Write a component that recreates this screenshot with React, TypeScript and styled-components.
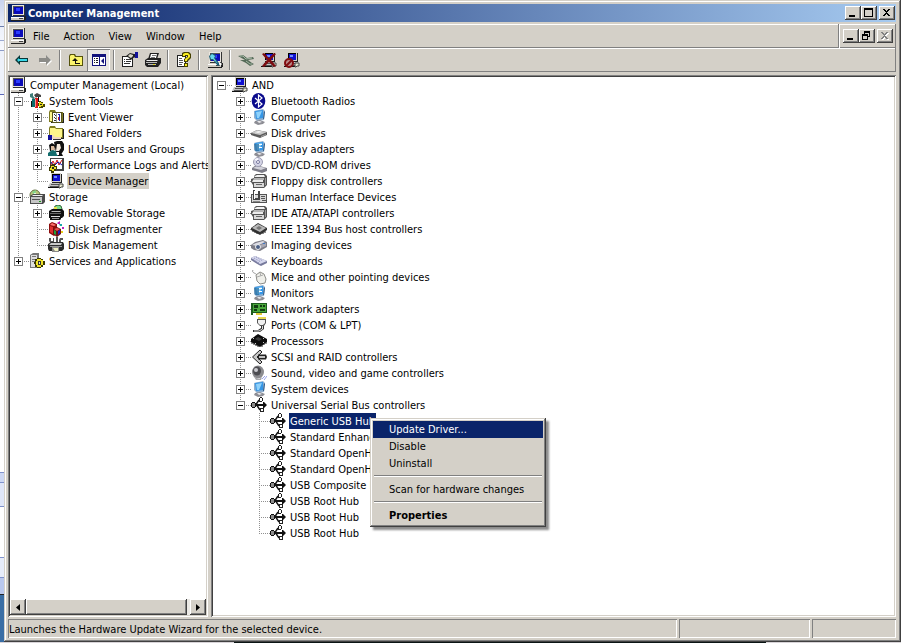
import React from "react";
import styled, { createGlobalStyle, css } from "styled-components";

const face = "#d4d0c8";
const shade = "#808080";
const dark = "#404040";
const navy = "#0a246a";

const GlobalStyle = createGlobalStyle`
  * { box-sizing: border-box; }
  html, body, #root { height: 100%; }
  body {
    margin: 0;
    overflow: hidden;
    background: #eef1fa;
    color: #000;
    font-family: "DejaVu Sans Condensed", "DejaVu Sans", sans-serif;
    font-size: 11px;
    line-height: 16px;
  }
  button {
    margin: 0;
    padding: 0;
    border: 0;
    background: transparent;
    color: inherit;
    font: inherit;
  }
`;

const raised = css`
  background: ${face};
  box-shadow: inset -1px -1px ${dark}, inset 1px 1px #fff, inset -2px -2px ${shade};
`;

const Desktop = styled.div`
  height: 100vh;
  display: flex;
  flex-direction: column;
`;
const DesktopRow = styled.div`
  flex: 1;
  min-height: 0;
  display: flex;
`;
const Backdrop = styled.div`
  width: 4px;
  flex: none;
  display: flex;
  flex-direction: column;
  overflow: hidden;
  background: linear-gradient(#c9d3ee 0, #eef2fb 30px, #fbfcff 60px, #fff 480px);
`;
const Sliver = styled.div<{ $h: number; $bg?: string; $line?: string }>`
  height: ${(p) => p.$h}px;
  flex: none;
  background: ${(p) => p.$bg ?? "transparent"};
  border-top: 1px solid ${(p) => p.$line ?? "transparent"};
`;
const Taskbar = styled.div`
  height: 1px;
  flex: none;
  display: flex;
  background: #d8d4d8;
`;
const TaskbarDark = styled.div`
  margin-left: 26%;
  width: 59%;
  background: #0a1414;
`;

const Window = styled.main`
  flex: 1;
  min-width: 0;
  display: flex;
  flex-direction: column;
  padding: 4px 5px 4px 4px;
  background: ${face};
  box-shadow: inset -1px -1px ${dark}, inset 1px 1px ${face}, inset -2px -2px ${shade}, inset 2px 2px #fff;
`;
const TitleBar = styled.header`
  height: 18px;
  flex: none;
  display: flex;
  align-items: center;
  padding: 0 1px 0 2px;
  background: linear-gradient(to right, ${navy}, #a6caf0);
  color: #fff;
`;
const Title = styled.h1`
  margin: 0 0 0 2px;
  flex: 1;
  padding-top: 1px;
  font-size: 11px;
  font-weight: bold;
  line-height: 18px;
`;
const CaptionButtons = styled.div`
  display: flex;
`;
const CaptionButton = styled.button<{ $gap?: boolean }>`
  ${raised}
  width: 16px;
  height: 14px;
  margin-left: ${(p) => (p.$gap ? 2 : 0)}px;
  display: flex;
  svg { display: block; }
`;

const bar = css`
  height: 24px;
  flex: none;
  display: flex;
  align-items: center;
  box-shadow: inset -1px -1px ${shade}, inset 1px 1px #fff;
`;
const MenuBar = styled.nav`
  ${bar}
  margin-top: 2px;
  padding: 0 3px 0 2px;
`;
const MenuButton = styled.button`
  padding: 1px 7px 0;
  height: 20px;
`;
const ChildButtons = styled.div`
  height: 24px;
  margin-left: auto;
  display: flex;
  align-items: center;
  padding-left: 3px;
  border-left: 1px solid #fff;
  box-shadow: -1px 0 ${shade};
`;
const ToolBar = styled.div`
  ${bar}
  padding: 0 2px;
`;
const ToolButton = styled.button<{ $pressed?: boolean }>`
  width: 23px;
  height: 22px;
  display: flex;
  align-items: center;
  justify-content: center;
  ${(p) =>
    p.$pressed &&
    css`
      background: #eae8e4;
      box-shadow: inset 1px 1px ${shade}, inset -1px -1px #fff;
    `}
`;
const ToolDivider = styled.span`
  width: 2px;
  height: 20px;
  margin: 0 3px;
  border-left: 1px solid ${shade};
  border-right: 1px solid #fff;
`;

const Panes = styled.div`
  flex: 1;
  min-height: 0;
  margin-top: 3px;
  display: flex;
  gap: 3px;
`;
const Pane = styled.section<{ $side?: boolean }>`
  display: flex;
  flex-direction: column;
  min-width: 0;
  overflow: hidden;
  padding: 2px;
  background: #fff;
  box-shadow: inset 1px 1px ${shade}, inset -1px -1px #fff, inset 2px 2px ${dark}, inset -2px -2px ${face};
  ${(p) => (p.$side ? "width: 200px; flex: none;" : "flex: 1;")}
`;
const Tree = styled.ul`
  flex: 1;
  min-height: 0;
  margin: 0;
  padding: 0;
  list-style: none;
`;
const Node = styled.li`
  position: relative;
  display: flex;
  height: 16px;
  white-space: nowrap;
`;
const dotsDown = (h: string) =>
  `repeating-linear-gradient(#909090 0 1px, transparent 1px 2px) 8px 0 / 1px ${h} no-repeat`;
const dotsAcross = `repeating-linear-gradient(to right, #909090 0 1px, transparent 1px 2px) 8px 8px / 11px 1px no-repeat`;
const guides: Record<string, string> = {
  b: "none",
  v: dotsDown("16px"),
  t: `${dotsDown("16px")}, ${dotsAcross}`,
  l: `${dotsDown("9px")}, ${dotsAcross}`,
  o: dotsAcross,
};
const Guide = styled.span<{ $kind: string }>`
  width: 19px;
  flex: none;
  padding: 4px;
  background: ${(p) => guides[p.$kind]};
`;
const Expander = styled.button`
  display: block;
  width: 9px;
  height: 9px;
  svg { display: block; }
`;
const Label = styled.span<{ $tone?: string }>`
  margin-left: 3px;
  padding: 1px 1px 0;
  ${(p) => p.$tone === "active" && `background: ${navy}; color: #fff;`}
  ${(p) => p.$tone === "idle" && `background: ${face};`}
`;
const Glyph = styled.svg`
  display: block;
  flex: none;
`;

const ScrollBar = styled.div`
  height: 16px;
  flex: none;
  display: flex;
  background: #ebe9e5;
`;
const ScrollArrow = styled.button`
  ${raised}
  width: 16px;
  flex: none;
  display: flex;
  align-items: center;
  justify-content: center;
`;
const ScrollTrack = styled.div`
  flex: 1;
  display: flex;
`;
const ScrollThumb = styled.div`
  ${raised}
  width: 98%;
`;

const StatusBar = styled.footer`
  flex: none;
  margin-top: 2px;
  display: grid;
  grid-template-columns: 1fr 131px 84px;
  gap: 2px;
`;
const StatusCell = styled.div`
  height: 19px;
  padding: 1px 1px 0;
  line-height: 20px;
  box-shadow: inset 1px 1px ${shade}, inset -1px -1px #fff;
`;

const Popup = styled.div`
  position: absolute;
  z-index: 1;
  left: 157px;
  top: 5px;
  width: 176px;
  padding: 3px;
  background: ${face};
  box-shadow: inset -1px -1px ${dark}, inset 1px 1px ${face}, inset -2px -2px ${shade}, inset 2px 2px #fff,
    3px 3px 2px rgba(0, 0, 0, 0.45);
`;
const PopupItem = styled.button<{ $active?: boolean; $bold?: boolean }>`
  display: block;
  width: 100%;
  height: 17px;
  padding: 0 16px;
  text-align: left;
  line-height: 17px;
  font-weight: ${(p) => (p.$bold ? "bold" : "normal")};
  ${(p) => p.$active && `background: ${navy}; color: #fff;`}
`;
const PopupRule = styled.hr`
  height: 2px;
  margin: 3px 1px 4px;
  border: 0;
  border-top: 1px solid ${shade};
  border-bottom: 1px solid #fff;
`;

/* 16x16 drawings */

const xpMonitor = (
  <>
    <path d="M3 2 12 0 14 2 13 11 6 12 3 9Z" fill="#8fb0d0" />
    <path d="M4 2 12 1 12 9 5 10Z" fill="#3596e6" />
    <path d="M5 3 11 2 8 9 6 9Z" fill="#8fd2fb" />
    <path d="M13 2 14 3 13 10 12 10Z" fill="#2f5b88" />
    <path d="M4 12 9 11 14 13 12 15 7 16 3 14Z" fill="#8d8d94" />
    <path d="M6 12 9 12 11 13 8 14Z" fill="#e6e6ea" />
  </>
);
const drive = (
  <>
    <path d="M0 8 6 5 16 7 16 10 9 13 0 10Z" fill="#5c5c5c" />
    <path d="M0 8 6 5 16 7 9 10Z" fill="#c9c9c9" />
    <path d="M4 7 8 6 11 7 7 8Z" fill="#f4f4f4" />
    <path d="M10 11 15 9V10L10 12Z" fill="#a4a4a4" />
  </>
);
const controllerBox = (
  <>
    <path d="M3 3 5 1H14L16 3V12L13 15H2V12L0 9V6L3 5Z" fill="#555" />
    <path d="M4 3 6 2H13L14 4H3Z" fill="#f2f2f2" />
    <path d="M3 5H13V7H2Z" fill="#b5b5b5" />
    <path d="M2 7H12V9H1Z" fill="#ececec" />
    <path d="M3 10H13V14H3Z" fill="#d8d8d8" />
    <path d="M5 11H11V12H5Z" fill="#666" />
    <path d="M14 5H15V12H14Z" fill="#999" />
  </>
);
const laptopPc = (
  <>
    <path d="M3 0H13V9H3Z" fill="#d4d0c8" />
    <path d="M4 1H12V8H4Z" fill="#000" />
    <path d="M5 2H12V8H5Z" fill="#1010d0" />
    <path d="M6 3H9V5H6Z" fill="#6f8cff" />
    <path d="M13 1H14V10H4V9H13Z" fill="#222" />
    <path d="M2 10H13L15 14H0Z" fill="#c4c4c4" />
    <path d="M3 11H12V12H3ZM2 13H11V14H2Z" fill="#555" />
    <path d="M0 14H13V15H0Z" fill="#111" />
    <path d="M11 11H15V14H13L12 15H11Z" fill="#e8e8d0" stroke="#444" strokeWidth="1" />
  </>
);
const folder = (
  <>
    <path d="M1 3 2 1H7L8 3H15V13H1Z" fill="#7d7a20" />
    <path d="M2 3H7L8 4H14V12H2Z" fill="#fdf58a" />
    <path d="M15 4H16V14H3V13H15Z" fill="#222" />
  </>
);
const monitorPc = (
  <>
    <path d="M2 0H14V11H2Z" fill="#e9e6df" />
    <path d="M3 1H13V9H3Z" fill="#555" />
    <path d="M4 2H13V9H4Z" fill="#0b0bb8" />
    <path d="M6 3H10V6H6Z" fill="#2b3cff" />
    <path d="M14 0H15V11H3V10H14Z" fill="#333" />
    <path d="M1 12H14V15H1Z" fill="#cfcbc3" />
    <path d="M1 12H14V13H1Z" fill="#fff" />
    <path d="M9 13H13V14H9Z" fill="#444" />
    <path d="M14 11H16V15H15V16H1V15H14Z" fill="#222" />
  </>
);

const icons: Record<string, React.ReactNode> = {
  pc: monitorPc,
  devices: laptopPc,
  tools: (
    <>
      <path d="M1 1 4 0V3L6 5 4 7 3 5 1 4Z" fill="#3e7d78" />
      <path d="M5 2 8 0 12 2V4H8L7 5Z" fill="#444" />
      <path d="M3 6H6V14H3Z" fill="#0b6b6b" />
      <path d="M6 5H9V15H6Z" fill="#e01818" />
      <path d="M6 6H7V14H6Z" fill="#ff8a8a" />
      <path d="M9 4H10V9H9ZM2 8H3V14H2Z" fill="#111" />
      <path d="M10 8H12V9H14V11H16V14H14V15H10V13H9V10H10Z" fill="#4a4700" />
      <path d="M10 9H12V10H14V13H12V14H10Z" fill="#e8dc20" />
      <path d="M11 11H13V12H11Z" fill="#222" />
    </>
  ),
  events: (
    <>
      {folder}
      <path d="M4 3H14V14H4Z" fill="#55521c" />
      <path d="M5 4H13V13H5Z" fill="#fff" />
      <path d="M6 5H7V6H6ZM7 6H8V7H7ZM6 8H7V9H6ZM7 9H8V10H7ZM6 11H8V12H6Z" fill="#333" />
      <path d="M8 4H9V13H8Z" fill="#999" />
      <path d="M10 5H12V6H10ZM11 6H12V12H11Z" fill="#2222bb" />
      <path d="M10 8H11V11H10Z" fill="#d02020" />
    </>
  ),
  shared: (
    <>
      {folder}
      <path d="M1 10H5L7 12H13V14H5L3 15H1Z" fill="#f0d8c0" />
      <path d="M0 10H4V15H0Z" fill="#10109a" />
      <path d="M5 14H13V15H5Z" fill="#333" />
    </>
  ),
  users: (
    <>
      <path d="M6 1 9 0H14L16 3V9L14 12H8Z" fill="#111" />
      <path d="M9 3H12L13 7 11 10H8Z" fill="#f5e9dc" />
      <path d="M1 4 4 2 7 4V8L5 10H2Z" fill="#0d0d0d" />
      <path d="M3 5H6L7 8 5 10H3Z" fill="#d8b79a" />
      <path d="M0 12 4 9 8 10 10 14V15H0Z" fill="#146d6d" />
      <path d="M9 11 13 11 15 15H10Z" fill="#111" />
      <path d="M8 11H11V14H9Z" fill="#fff" />
    </>
  ),
  perf: (
    <>
      <path d="M2 1H16V14H2Z" fill="#444" />
      <path d="M3 2H14V12H3Z" fill="#fff" />
      <path d="M3 8 5 4 7 8 9 3 11 8 14 3" fill="none" stroke="#d01818" />
      <path d="M3 5 6 9 10 5 14 8" fill="none" stroke="#1414b0" />
      <path d="M2 8H4V7H7V9H9V12H8V14H6V16H3V14H1V10H2Z" fill="#3c3a00" />
      <path d="M3 9H6V10H8V12H6V14H4V13H2V11H3Z" fill="#ece02a" />
      <path d="M4 10H6V12H4Z" fill="#222" />
    </>
  ),
  storage: (
    <>
      <circle cx="6" cy="6" r="5" fill="#b9c47a" stroke="#667040" />
      <path d="M3 3 6 6 7 1Z" fill="#7fd88a" />
      <circle cx="6" cy="5" r="1" fill="#fff" />
      <path d="M1 7 4 5H16V13L14 15H1Z" fill="#4b4b4b" />
      <path d="M2 8H13V14H2Z" fill="#c6c6c6" />
      <path d="M4 6H14L13 7H3Z" fill="#f0f0f0" />
      <path d="M3 10H11V11H3Z" fill="#555" />
      <path d="M10 12H12V13H10Z" fill="#18a018" />
    </>
  ),
  removable: (
    <>
      <circle cx="10" cy="4" r="4" fill="#7ddc8c" stroke="#3b6b42" />
      <path d="M6 2H9V5H6Z" fill="#e7e24b" />
      <path d="M1 6 4 4H14L16 6V11L14 13H1Z" fill="#111" />
      <path d="M4 6H13L12 7H3Z" fill="#bbb" />
      <path d="M2 8H13V9H2Z" fill="#666" />
      <path d="M2 10H13V14L12 15H2Z" fill="#111" />
      <path d="M3 11H12V12H3Z" fill="#ddd" />
      <path d="M4 13H11V14H4Z" fill="#999" />
    </>
  ),
  defrag: (
    <>
      <path d="M1 3 4 1 9 3V13L6 15 1 12Z" fill="#8c0c0c" />
      <path d="M2 4 4 2 8 4 6 5Z" fill="#ff7070" />
      <path d="M2 5 5 6V13L2 11Z" fill="#e03030" />
      <path d="M5 8 9 6 13 8V13L9 16 5 13Z" fill="#701010" />
      <path d="M6 8 9 7 12 8 9 10Z" fill="#f05050" />
      <path d="M6 9 8 10V14L6 13Z" fill="#20a040" />
      <path d="M10 10 12 9V12L10 14Z" fill="#2020c8" />
      <path d="M9 2 12 0V3H10ZM14 6H16V8H14Z" fill="#bb22bb" />
      <path d="M11 3H14V5H12Z" fill="#18a8a8" />
      <path d="M13 10H15V12H13Z" fill="#e8d018" />
    </>
  ),
  diskmgmt: (
    <>
      <path d="M1 1H3V4H5V1H6V5L4 7H3L1 4ZM8 0H10V5H8ZM12 1H15V3H13V6H11V3Z" fill="#555" />
      <path d="M0 7 3 5H15L16 7V12L14 14H1L0 12Z" fill="#2c2c2c" />
      <path d="M3 6H14L13 8H1Z" fill="#c9c9c9" />
      <path d="M2 9H14V10H2Z" fill="#999" />
      <path d="M4 10H11V15H4Z" fill="#888" />
      <path d="M5 11H10V14H7Z" fill="#f1f1c0" />
    </>
  ),
  services: (
    <>
      <path d="M1 2 4 0H10V12L8 15H1Z" fill="#777" />
      <path d="M2 2H8V14H2Z" fill="#dedede" />
      <path d="M3 3H7V4H3ZM3 6H7V7H3ZM3 8H7V9H3Z" fill="#777" />
      <path d="M8 5H12V6H14V8H16V12H14V14H12V15H8V14H6V11H5V9H6V6H8Z" fill="#3a3800" />
      <path d="M8 6H12V7H14V12H12V14H8V12H7V8H8Z" fill="#f0e428" />
      <path d="M9 8H12V12H9Z" fill="#333" />
      <path d="M10 9H11V11H10Z" fill="#ddd" />
    </>
  ),
  bluetooth: (
    <>
      <ellipse cx="7.5" cy="8" rx="6.8" ry="8" fill="#0a0a8c" />
      <path d="M4 5 11 11 7.5 14V2L11 5 4 11" fill="none" stroke="#fff" strokeWidth="1.2" />
    </>
  ),
  monitor: xpMonitor,
  display: (
    <>
      {xpMonitor}
      <path d="M3 3H8V10H4Z" fill="#2c6f9e" opacity="0.7" />
      <path d="M8 3H11V4H8ZM8 6H11V7H8Z" fill="#fff" />
    </>
  ),
  drive,
  dvd: (
    <>
      <path d="M1 11 5 8 16 11V14L11 16 1 13Z" fill="#7d7d88" />
      <path d="M2 11 6 9 15 11 10 13Z" fill="#d2d2da" />
      <circle cx="7" cy="5" r="4.5" fill="#d4d4e6" stroke="#9a9ab0" />
      <path d="M7 5 3 2 7 1Z" fill="#fafaff" />
      <circle cx="7" cy="5" r="1.5" fill="#fff" stroke="#7777a0" />
    </>
  ),
  controller: controllerBox,
  hid: (
    <>
      <path d="M0 5H16V14H0Z" fill="#555" />
      <path d="M1 6H15V13H1Z" fill="#d8d8d8" />
      <path d="M2 1H4V9H7V2H9V11H2Z" fill="#444" />
      <path d="M3 2H4V10H3Z" fill="#fff" />
      <path d="M10 7H14V8H10ZM10 9H14V10H10ZM11 11H15V12H11Z" fill="#555" />
      <path d="M2 12H9V13H2Z" fill="#888" />
    </>
  ),
  firewire: (
    <>
      <path d="M0 7 7 2 16 7V9L9 14 0 9Z" fill="#333" />
      <path d="M1 7 7 3 15 7 9 11Z" fill="#b9b9b9" />
      <path d="M5 7 8 5 11 7 8 9Z" fill="#777" />
      <path d="M2 9V11M4 10V12M6 11V13M12 11V13M14 10V12" fill="none" stroke="#222" />
    </>
  ),
  camera: (
    <>
      <path d="M0 8 4 5 12 3 16 5V10L9 14 3 13 0 11Z" fill="#7c7c86" />
      <path d="M1 8 5 6 12 4 14 5 6 9Z" fill="#dcdce4" />
      <path d="M9 8 15 6V9L10 11Z" fill="#a8a8b4" />
      <circle cx="7" cy="10" r="2.5" fill="#4b5f86" stroke="#eee" />
      <path d="M12 6H14V7H12Z" fill="#3d78c8" />
    </>
  ),
  keyboard: (
    <>
      <path d="M0 5 4 3 16 8V10L10 13 8 12 0 7Z" fill="#777a9c" />
      <path d="M0 5 4 3 16 8 9 11Z" fill="#d7d9ee" />
      <path d="M3 5 10 9M5 4 12 8M2 6 8 10" stroke="#8a8cb8" strokeDasharray="1 1" fill="none" />
    </>
  ),
  mouse: (
    <>
      <path d="M2 1C0 4 5 4 6 6" fill="none" stroke="#999" />
      <path d="M5 6 9 3 13 5 15 10 14 14 9 15 6 12Z" fill="#efefea" stroke="#8c8c88" />
      <path d="M6 8 12 6M9 4 10 7" stroke="#aaa" fill="none" />
    </>
  ),
  network: (
    <>
      <path d="M0 2H16V12H2V14H0Z" fill="#1c5a1c" />
      <path d="M2 3H15V11H2Z" fill="#49a83c" />
      <path d="M3 4H7V7H3ZM9 4H11V6H9ZM12 4H14V6H12ZM9 8H14V10H9ZM3 8H6V10H3Z" fill="#103c10" />
      <path d="M5 12H11V14H5Z" fill="#e0c838" />
    </>
  ),
  port: (
    <>
      <path d="M7 0H15V2H7Z" fill="#e8d850" />
      <path d="M6 2H15V6L13 9H9L6 6Z" fill="#555" />
      <path d="M7 3H14V6L12 8H9L7 6Z" fill="#f0f0f0" />
      <path d="M10 9H13V12L9 15H2V13H7L10 11Z" fill="#333" />
      <path d="M11.5 9V12L8 14H3" fill="none" stroke="#ddd" />
    </>
  ),
  cpu: (
    <>
      <path d="M0 6 7 1 16 6V9L9 14 0 9Z" fill="#0c0c0c" />
      <path d="M4 6 7 4 11 6 8 8Z" fill="#3a3a3a" />
      <path d="M1 9V11M3 10V12M5 11V13M7 12V14M11 12V14M13 11V12M15 9V11" stroke="#222" />
      <path d="M2 5H3V6H2ZM12 5H13V6H12ZM4 10H5V11H4ZM12 9H13V10H12Z" fill="#ccc" />
    </>
  ),
  scsi: (
    <>
      <path d="M9 1 1.5 8 9 15 11 13 6 8 11 3Z" fill="#c8c8c8" stroke="#222" />
      <path d="M7 5.5H15L16 8 15 10.5H7Z" fill="#222" />
      <path d="M8 7H14V9H8Z" fill="#c0c0c0" />
    </>
  ),
  sound: (
    <>
      <ellipse cx="7" cy="7" rx="6" ry="6.5" fill="#8b8b8f" />
      <ellipse cx="6" cy="6" rx="4" ry="4.5" fill="#4d4d52" />
      <ellipse cx="5" cy="5" rx="2" ry="2" fill="#c9c9cf" />
      <path d="M3 12 8 14 11 12 10 15 5 15Z" fill="#a6a6aa" />
      <path d="M11 14 14 11M13 15 16 11" stroke="#9aa4e8" fill="none" />
    </>
  ),
  usb: (
    <>
      <path d="M5 7.5 8 3M6 8.5 9 13" fill="none" stroke="#111" strokeWidth="1.4" />
      <path d="M0 6H1V5H4V6H5V10H4V11H1V10H0Z" fill="#111" />
      <path d="M1 6H4V10H1Z" fill="#8c8c8c" />
      <path d="M5 7H12V5H13L16 8 13 11H12V9H5Z" fill="#111" />
      <path d="M8 1H9V0H11V1H12V4H11V5H8Z" fill="#222" />
      <path d="M9 1H11V4H9Z" fill="#fff" />
      <path d="M9 11H13V15H9Z" fill="#222" />
      <path d="M10 12H12V14H10Z" fill="#fff" />
    </>
  ),
  back: (
    <>
      <path d="M1 8 6 3V6H14V10H6V13Z" fill="#083838" />
      <path d="M3 8 5 6V7H13V9H5V10Z" fill="#38d8e8" />
    </>
  ),
  forward: (
    <>
      <path d="M15 9 10 4V7H3V11H10V14Z" fill="#fff" />
      <path d="M14 8 9 3V6H2V10H9V13Z" fill="#8c8c88" />
    </>
  ),
  up: (
    <>
      <path d="M1 4 2 2H7L8 4H15V14H1Z" fill="#55520c" />
      <path d="M2 4 3 3H6L7 5H14V13H2Z" fill="#fbf46c" />
      <path d="M7 6 10 9H8V11H12V12H7V9H4Z" fill="#111" />
    </>
  ),
  tree: (
    <>
      <path d="M1 2H15V14H1Z" fill="#14147c" />
      <path d="M2 5H8V13H2ZM9 5H14V13H9Z" fill="#fff" />
      <path d="M3 6H4V7H3ZM5 6H7V7H5ZM3 8H4V9H3ZM5 8H7V9H5ZM3 10H4V11H3ZM5 10H7V11H5Z" fill="#222" />
      <path d="M13 6V12L10 9Z" fill="#14147c" />
    </>
  ),
  props: (
    <>
      <path d="M0 4H11V15H0Z" fill="#222" />
      <path d="M1 5H10V14H1Z" fill="#fff" />
      <path d="M2 7H3V8H2ZM4 7H9V8H4ZM2 9H3V10H2ZM4 9H9V10H4ZM2 11H8V12H2Z" fill="#333" />
      <path d="M4 4 8 1 12 2H14V5L11 6 9 8 7 6Z" fill="#222" />
      <path d="M6 4 8 2 11 3V4L9 6Z" fill="#d8d8c8" />
      <path d="M13 0H16V6H13Z" fill="#12129a" />
    </>
  ),
  print: (
    <>
      <path d="M5 1H14L12 7H3Z" fill="#222" />
      <path d="M6 2H12L11 6H5Z" fill="#fff" />
      <path d="M7 3H11V4H7ZM6 5H10V6H6Z" fill="#777" />
      <path d="M0 8 3 6H16V11L13 15H2L0 13Z" fill="#222" />
      <path d="M2 8H13L12 9H1Z" fill="#eee" />
      <path d="M1 10H12V11H1ZM3 12H11V13H3Z" fill="#bbb" />
      <path d="M8 12H10V13H8Z" fill="#e4d81c" />
    </>
  ),
  help: (
    <>
      <path d="M1 3H10V15H1Z" fill="#222" />
      <path d="M2 4H9V14H2Z" fill="#fff" />
      <path d="M3 6H6V7H3ZM3 8H7V9H3ZM3 10H7V11H3ZM3 12H6V13H3Z" fill="#555" />
      <path d="M6 1 8 0H13L15 2V6L12 9V10H8V7L11 5V4H9V5H6ZM8 11H12V15H8Z" fill="#444000" />
      <path d="M7 2 9 1H12L14 3V5L11 8V9H9V7L12 5V3H9V4H7ZM9 12H11V14H9Z" fill="#f8ec20" />
    </>
  ),
  scan: (
    <>
      {monitorPc}
      <path d="M2 4 5 1 9 3 8 6 13 12 11 14 6 8 3 8Z" fill="#1c5c74" />
      <path d="M3 4 5 2 8 4 7 6 11 12 6 7 4 7Z" fill="#68d8ec" />
      <path d="M11 9 15 12 13 14Z" fill="#fff" />
    </>
  ),
  update: (
    <>
      <path d="M0 4 5 3 9 6 15 5 16 7 10 8 14 11 16 12 12 14 8 11 2 8 7 8Z" fill="#556a58" />
      <path d="M2 4 5 4 8 7 14 6M8 9 12 12 14 12" fill="none" stroke="#a5b8a4" />
    </>
  ),
  remove: (
    <>
      {laptopPc}
      <path d="M1 2 3 1 8 6 13 1 15 2 10 8 15 14 13 15 8 10 3 15 1 14 6 8Z" fill="#7c0c10" />
    </>
  ),
  disable: (
    <>
      {laptopPc}
      <circle cx="5" cy="11" r="4" fill="#b98a8a" stroke="#800c10" strokeWidth="2" />
      <path d="M2 14 8 8" stroke="#800c10" strokeWidth="2" />
    </>
  ),
};

const Icon = ({ name }: { name: string }) => (
  <Glyph width="16" height="16" viewBox="0 0 16 16" aria-hidden="true">
    {icons[name]}
  </Glyph>
);

const captionPaths: Record<string, string> = {
  Minimize: "M4 9H10V11H4Z",
  Maximize: "M3 2H12V11H3ZM4 4V10H11V4Z",
  Restore: "M5 2H11V8H9V7H10V4H6V5H5ZM3 5H9V11H3ZM4 7V10H8V7Z",
  Close: "M4 3H6V4H7V5H8V4H9V3H11V4H10V5H9V6H8V7H9V8H10V9H11V10H9V9H8V8H7V9H6V10H4V9H5V8H6V7H7V6H6V5H5V4H4Z",
};
const Caption = ({ kind, gap, disabled }: { kind: string; gap?: boolean; disabled?: boolean }) => (
  <CaptionButton $gap={gap} disabled={disabled} aria-label={kind}>
    <svg width="16" height="14" viewBox="0 0 16 14" fillRule="evenodd">
      {disabled && <path d={captionPaths[kind]} fill="#fff" transform="translate(1 1)" />}
      <path d={captionPaths[kind]} fill={disabled ? shade : "#000"} />
    </svg>
  </CaptionButton>
);

type Item = { cells: string[]; icon: string; text: string; tone?: string };

const consoleTree: Item[] = [
  { cells: [], icon: "pc", text: "Computer Management (Local)" },
  { cells: ["t-"], icon: "tools", text: "System Tools" },
  { cells: ["v", "t+"], icon: "events", text: "Event Viewer" },
  { cells: ["v", "t+"], icon: "shared", text: "Shared Folders" },
  { cells: ["v", "t+"], icon: "users", text: "Local Users and Groups" },
  { cells: ["v", "t+"], icon: "perf", text: "Performance Logs and Alerts" },
  { cells: ["v", "l"], icon: "devices", text: "Device Manager", tone: "idle" },
  { cells: ["t-"], icon: "storage", text: "Storage" },
  { cells: ["v", "t+"], icon: "removable", text: "Removable Storage" },
  { cells: ["v", "t"], icon: "defrag", text: "Disk Defragmenter" },
  { cells: ["v", "l"], icon: "diskmgmt", text: "Disk Management" },
  { cells: ["l+"], icon: "services", text: "Services and Applications" },
];

const categories: [string, string][] = [
  ["bluetooth", "Bluetooth Radios"],
  ["monitor", "Computer"],
  ["drive", "Disk drives"],
  ["display", "Display adapters"],
  ["dvd", "DVD/CD-ROM drives"],
  ["controller", "Floppy disk controllers"],
  ["hid", "Human Interface Devices"],
  ["controller", "IDE ATA/ATAPI controllers"],
  ["firewire", "IEEE 1394 Bus host controllers"],
  ["camera", "Imaging devices"],
  ["keyboard", "Keyboards"],
  ["mouse", "Mice and other pointing devices"],
  ["display", "Monitors"],
  ["network", "Network adapters"],
  ["port", "Ports (COM & LPT)"],
  ["cpu", "Processors"],
  ["scsi", "SCSI and RAID controllers"],
  ["sound", "Sound, video and game controllers"],
  ["monitor", "System devices"],
];
const usbDevices = [
  "Generic USB Hub",
  "Standard Enhanced PCI to USB Host Controller",
  "Standard OpenHCD USB Host Controller",
  "Standard OpenHCD USB Host Controller",
  "USB Composite Device",
  "USB Root Hub",
  "USB Root Hub",
  "USB Root Hub",
];
const deviceTree: Item[] = [
  { cells: ["o-"], icon: "devices", text: "AND" },
  ...categories.map(([icon, text]) => ({ cells: ["b", "t+"], icon, text })),
  { cells: ["b", "l-"], icon: "usb", text: "Universal Serial Bus controllers" },
  ...usbDevices.map((text, i) => ({
    cells: ["b", "b", i === usbDevices.length - 1 ? "l" : "t"],
    icon: "usb",
    text,
    tone: i === 0 ? "active" : undefined,
  })),
];

const ContextMenu = () => (
  <Popup role="menu">
    <PopupItem role="menuitem" $active>Update Driver...</PopupItem>
    <PopupItem role="menuitem">Disable</PopupItem>
    <PopupItem role="menuitem">Uninstall</PopupItem>
    <PopupRule />
    <PopupItem role="menuitem">Scan for hardware changes</PopupItem>
    <PopupRule />
    <PopupItem role="menuitem" $bold>Properties</PopupItem>
  </Popup>
);

const TreeView = ({ items, label }: { items: Item[]; label: string }) => (
  <Tree role="tree" aria-label={label}>
    {items.map((item, i) => (
      <Node key={i} role="treeitem" aria-selected={!!item.tone}>
        {item.cells.map((cell, c) => (
          <Guide key={c} $kind={cell[0]}>
            {cell[1] && (
              <Expander aria-label={`${cell[1] === "+" ? "Expand" : "Collapse"} ${item.text}`}>
                <svg width="9" height="9" viewBox="0 0 9 9">
                  <path d="M0 0H9V9H0Z" fill="#808080" />
                  <path d="M1 1H8V8H1Z" fill="#fff" />
                  <path d={cell[1] === "+" ? "M2 4H4V2H5V4H7V5H5V7H4V5H2Z" : "M2 4H7V5H2Z"} />
                </svg>
              </Expander>
            )}
          </Guide>
        ))}
        <Icon name={item.icon} />
        <Label $tone={item.tone}>{item.text}</Label>
        {item.tone === "active" && <ContextMenu />}
      </Node>
    ))}
  </Tree>
);

const toolGroups: [string, string][][] = [
  [["back", "Back"], ["forward", "Forward"]],
  [["up", "Up one level"], ["tree", "Show/Hide console tree"]],
  [["props", "Properties"], ["print", "Print"]],
  [["help", "Help"]],
  [["scan", "Scan for hardware changes"]],
  [["update", "Update driver"], ["remove", "Uninstall"], ["disable", "Disable"]],
];

export default function App() {
  return (
    <Desktop>
      <GlobalStyle />
      <DesktopRow>
        <Backdrop aria-hidden="true">
          <Sliver $h={26} />
          <Sliver $h={14} $line="#6d7fae" />
          <Sliver $h={10} $line="#9aa8d0" />
          <Sliver $h={44} $line="#8b9ac6" $bg="#eef2fb" />
          <Sliver $h={378} $line="#5b67b8" />
          <Sliver $h={10} $line="#7f92cc" $bg="#cdd8f4" />
          <Sliver $h={24} $line="#7f92cc" $bg="#dfe6f8" />
          <Sliver $h={51} $line="#7f92cc" />
          <Sliver $h={20} $line="#7f92cc" $bg="#e6ecfa" />
          <Sliver $h={17} $line="#7f92cc" $bg="#b9c8ee" />
          <Sliver $h={60} $line="#222" $bg="#3a6ea5" />
        </Backdrop>
        <Window>
          <TitleBar>
            <Icon name="pc" />
            <Title>Computer Management</Title>
            <CaptionButtons>
              <Caption kind="Minimize" />
              <Caption kind="Maximize" />
              <Caption kind="Close" gap />
            </CaptionButtons>
          </TitleBar>
          <MenuBar>
            <Icon name="pc" />
            {["File", "Action", "View", "Window", "Help"].map((m) => (
              <MenuButton key={m}>{m}</MenuButton>
            ))}
            <ChildButtons>
              <Caption kind="Minimize" />
              <Caption kind="Restore" />
              <Caption kind="Close" gap disabled />
            </ChildButtons>
          </MenuBar>
          <ToolBar role="toolbar">
            {toolGroups.map((group, g) => (
              <React.Fragment key={g}>
                {g > 0 && <ToolDivider />}
                {group.map(([icon, name]) => (
                  <ToolButton key={icon} $pressed={icon === "tree"} title={name} aria-label={name}>
                    <Icon name={icon} />
                  </ToolButton>
                ))}
              </React.Fragment>
            ))}
          </ToolBar>
          <Panes>
            <Pane $side>
              <TreeView items={consoleTree} label="Console tree" />
              <ScrollBar>
                <ScrollArrow aria-label="Scroll left">
                  <svg width="4" height="7" viewBox="0 0 4 7"><path d="M4 0V7L0 3.5Z" /></svg>
                </ScrollArrow>
                <ScrollTrack>
                  <ScrollThumb />
                </ScrollTrack>
                <ScrollArrow aria-label="Scroll right">
                  <svg width="4" height="7" viewBox="0 0 4 7"><path d="M0 0V7L4 3.5Z" /></svg>
                </ScrollArrow>
              </ScrollBar>
            </Pane>
            <Pane>
              <TreeView items={deviceTree} label="Devices" />
            </Pane>
          </Panes>
          <StatusBar>
            <StatusCell>Launches the Hardware Update Wizard for the selected device.</StatusCell>
            <StatusCell />
            <StatusCell />
          </StatusBar>
        </Window>
      </DesktopRow>
      <Taskbar>
        <TaskbarDark />
      </Taskbar>
    </Desktop>
  );
}
